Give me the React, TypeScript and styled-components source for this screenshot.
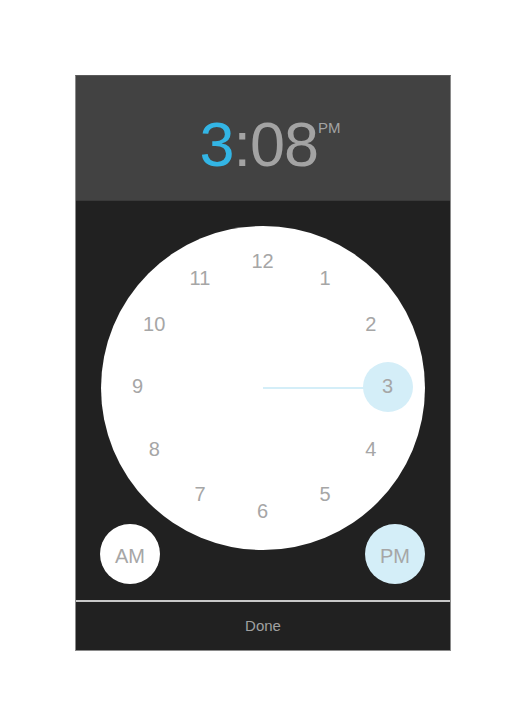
import React from 'react';
import styled, { createGlobalStyle } from 'styled-components';

const GlobalStyle = createGlobalStyle`
  html, body {
    margin: 0;
    padding: 0;
    background: #ffffff;
    font-family: "Liberation Sans", Arial, sans-serif;
  }
`;

const Page = styled.div`
  padding: 75px 0 0 75px;
`;

const Card = styled.div`
  width: 374px;
  border: 1px solid #8a8a8a;
  border-top-color: #5a5a5a;
  background: #212121;
`;

const Header = styled.div`
  height: 125px;
  background: #424242;
  border-bottom: 1px solid #3a3a3a;
  display: flex;
  align-items: center;
  justify-content: center;
  padding: 12px 0 0 14px;
  box-sizing: border-box;
`;

const TimeText = styled.div`
  display: flex;
  align-items: flex-start;
  font-size: 63px;
  line-height: 1;
  color: #a3a3a3;
  letter-spacing: -1px;
`;

const Hour = styled.span`
  color: #33b5e5;
`;

const Meridiem = styled.span`
  font-size: 15px;
  margin-top: 7px;
  letter-spacing: 0;
  color: #a3a3a3;
`;

const Body = styled.div`
  height: 399px;
  display: grid;
  grid-template: 1fr / 1fr;
  padding-top: 25px;
  box-sizing: border-box;
`;

const Face = styled.div`
  grid-area: 1 / 1;
  justify-self: center;
  position: relative;
  width: 324px;
  height: 324px;
  border-radius: 50%;
  background: #ffffff;
`;

const Hand = styled.div`
  position: absolute;
  left: 162px;
  top: 161px;
  height: 2px;
  width: 110px;
  background: #d4eef8;
`;

const Selected = styled.div`
  position: absolute;
  width: 50px;
  height: 50px;
  border-radius: 50%;
  background: #d4eef8;
`;

const Num = styled.span`
  position: absolute;
  transform: translate(-50%, -50%);
  font-size: 20px;
  color: #a6a6a6;
  line-height: 1;
`;

const PeriodRow = styled.div`
  grid-area: 1 / 1;
  align-self: end;
  display: flex;
  justify-content: space-between;
  padding: 0 25px 16px 24px;
`;

const PeriodButton = styled.div<{ $active?: boolean }>`
  width: 60px;
  height: 60px;
  border-radius: 50%;
  background: ${({ $active }) => ($active ? '#d4eef8' : '#ffffff')};
  display: flex;
  align-items: center;
  justify-content: center;
  font-size: 20px;
  color: #a6a6a6;
  padding-top: 4px;
  box-sizing: border-box;
`;

const Divider = styled.div`
  height: 2px;
  background: #c8c8c8;
`;

const DoneButton = styled.div`
  height: 48px;
  display: flex;
  align-items: center;
  justify-content: center;
  font-size: 15px;
  color: #a0a0a0;
  padding-bottom: 2px;
  box-sizing: border-box;
`;

const hours = [12, 1, 2, 3, 4, 5, 6, 7, 8, 9, 10, 11];

export default function App() {
  const cx = 162;
  const cy = 160;
  const r = 125;
  return (
    <Page>
      <GlobalStyle />
      <Card>
        <Header>
          <TimeText>
            <Hour>3</Hour>:08<Meridiem>PM</Meridiem>
          </TimeText>
        </Header>
        <Body>
          <Face>
            <Hand />
            <Selected style={{ left: cx + r - 25, top: cy - 24 }} />
            {hours.map((h, i) => {
              const a = (i * Math.PI) / 6;
              return (
                <Num key={h} style={{ left: cx + r * Math.sin(a) - 0.5, top: cy - r * Math.cos(a) }}>
                  {h}
                </Num>
              );
            })}
          </Face>
          <PeriodRow>
            <PeriodButton>AM</PeriodButton>
            <PeriodButton $active>PM</PeriodButton>
          </PeriodRow>
        </Body>
        <Divider />
        <DoneButton>Done</DoneButton>
      </Card>
    </Page>
  );
}
